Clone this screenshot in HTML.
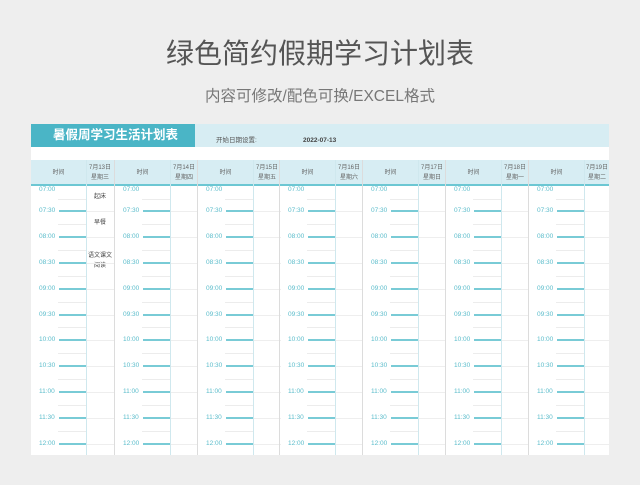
<!DOCTYPE html>
<html><head><meta charset="utf-8"><style>
*{margin:0;padding:0;box-sizing:border-box}
body{width:640px;height:485px;background:#eeeeee;position:relative;overflow:hidden;font-family:"Liberation Sans","Noto Sans CJK SC",sans-serif}
.t1{position:absolute;left:0;width:640px;top:36px;text-align:center;font-size:28px;color:#555;letter-spacing:0px;line-height:36px}
.t2{position:absolute;left:0;width:640px;top:87px;text-align:center;font-size:15.5px;color:#777;line-height:20px}
.sheet{position:absolute;left:31px;top:124px;width:578px;height:331px;background:#fff}
.band{position:absolute;left:0;top:0;width:578px;height:23px;background:#d7edf3}
.ttl{position:absolute;left:0;top:0;width:164px;height:23px;background:#4ab5c6;color:#fff;font-weight:bold;font-size:12.5px;line-height:23px;padding-left:22px}
.lab{position:absolute;top:13px;font-size:6.5px;color:#555;line-height:8px}
.hdr{position:absolute;left:0;top:36px;width:578px;height:26px;background:#d7edf3;border-bottom:2px solid #6cc7d3}
.g{position:absolute;top:36px;width:83px;height:295px;border-left:1px solid #dcdcdc}
.g .h1{position:absolute;left:0;top:0;width:55px;height:26px;line-height:26px;text-align:center;font-size:6px;color:#666}
.g .h2{position:absolute;left:55px;top:3px;width:28px;text-align:center;font-size:6px;color:#666;line-height:10px}
.g .dv{position:absolute;left:55px;top:0;width:1px;height:295px;background:#cfe8ee}
.g .tm{position:absolute;left:8px;font-size:6.5px;color:#5bbccb;line-height:8px}
.g .tl{position:absolute;left:28px;width:27px;height:2px;background:#79cbd6}
.g .hl{position:absolute;left:27px;width:28px;height:1px;background:#ececec}
.g .dl{position:absolute;left:56px;width:27px;height:1px;background:#eeeeee}
.ev{position:absolute;left:55px;width:28px;text-align:center;font-size:6px;color:#444;line-height:10px}
</style></head><body>
<div class="t1">绿色简约假期学习计划表</div>
<div class="t2">内容可修改/配色可换/EXCEL格式</div>
<div class="sheet">
<div class="band"></div>
<div class="ttl">暑假周学习生活计划表</div>
<div class="lab" style="left:185px">开始日期设置:</div>
<div class="lab" style="left:272px;font-weight:bold;color:#444">2022-07-13</div>
<div class="hdr"></div>

<div class="g" style="left:0;border-left:none">
<div class="h1">时间</div><div class="h2">7月13日<br>星期三</div><div class="dv"></div>
<div class="ev" style="top:32px">起床</div><div class="ev" style="top:58px">早餐</div><div class="ev" style="top:91px">语文课文<br>阅读</div>
<div class="tm" style="top:26px">07:00</div><div class="tm" style="top:47px">07:30</div><div class="tm" style="top:73px">08:00</div><div class="tm" style="top:99px">08:30</div><div class="tm" style="top:125px">09:00</div><div class="tm" style="top:151px">09:30</div><div class="tm" style="top:176px">10:00</div><div class="tm" style="top:202px">10:30</div><div class="tm" style="top:228px">11:00</div><div class="tm" style="top:254px">11:30</div><div class="tm" style="top:280px">12:00</div>
<div class="tl" style="top:50px"></div><div class="tl" style="top:76px"></div><div class="tl" style="top:102px"></div><div class="tl" style="top:128px"></div><div class="tl" style="top:154px"></div><div class="tl" style="top:179px"></div><div class="tl" style="top:205px"></div><div class="tl" style="top:231px"></div><div class="tl" style="top:257px"></div><div class="tl" style="top:283px"></div>
<div class="hl" style="top:39px"></div><div class="hl" style="top:64px"></div><div class="hl" style="top:90px"></div><div class="hl" style="top:116px"></div><div class="hl" style="top:142px"></div><div class="hl" style="top:167px"></div><div class="hl" style="top:193px"></div><div class="hl" style="top:219px"></div><div class="hl" style="top:245px"></div><div class="hl" style="top:271px"></div>
<div class="dl" style="top:51px"></div><div class="dl" style="top:77px"></div><div class="dl" style="top:103px"></div><div class="dl" style="top:129px"></div><div class="dl" style="top:155px"></div><div class="dl" style="top:180px"></div><div class="dl" style="top:206px"></div><div class="dl" style="top:232px"></div><div class="dl" style="top:258px"></div><div class="dl" style="top:284px"></div>
</div>

<div class="g" style="left:83px">
<div class="h1">时间</div><div class="h2">7月14日<br>星期四</div><div class="dv"></div>
<div class="tm" style="top:26px">07:00</div><div class="tm" style="top:47px">07:30</div><div class="tm" style="top:73px">08:00</div><div class="tm" style="top:99px">08:30</div><div class="tm" style="top:125px">09:00</div><div class="tm" style="top:151px">09:30</div><div class="tm" style="top:176px">10:00</div><div class="tm" style="top:202px">10:30</div><div class="tm" style="top:228px">11:00</div><div class="tm" style="top:254px">11:30</div><div class="tm" style="top:280px">12:00</div>
<div class="tl" style="top:50px"></div><div class="tl" style="top:76px"></div><div class="tl" style="top:102px"></div><div class="tl" style="top:128px"></div><div class="tl" style="top:154px"></div><div class="tl" style="top:179px"></div><div class="tl" style="top:205px"></div><div class="tl" style="top:231px"></div><div class="tl" style="top:257px"></div><div class="tl" style="top:283px"></div>
<div class="hl" style="top:39px"></div><div class="hl" style="top:64px"></div><div class="hl" style="top:90px"></div><div class="hl" style="top:116px"></div><div class="hl" style="top:142px"></div><div class="hl" style="top:167px"></div><div class="hl" style="top:193px"></div><div class="hl" style="top:219px"></div><div class="hl" style="top:245px"></div><div class="hl" style="top:271px"></div>
<div class="dl" style="top:51px"></div><div class="dl" style="top:77px"></div><div class="dl" style="top:103px"></div><div class="dl" style="top:129px"></div><div class="dl" style="top:155px"></div><div class="dl" style="top:180px"></div><div class="dl" style="top:206px"></div><div class="dl" style="top:232px"></div><div class="dl" style="top:258px"></div><div class="dl" style="top:284px"></div>
</div>

<div class="g" style="left:166px">
<div class="h1">时间</div><div class="h2">7月15日<br>星期五</div><div class="dv"></div>
<div class="tm" style="top:26px">07:00</div><div class="tm" style="top:47px">07:30</div><div class="tm" style="top:73px">08:00</div><div class="tm" style="top:99px">08:30</div><div class="tm" style="top:125px">09:00</div><div class="tm" style="top:151px">09:30</div><div class="tm" style="top:176px">10:00</div><div class="tm" style="top:202px">10:30</div><div class="tm" style="top:228px">11:00</div><div class="tm" style="top:254px">11:30</div><div class="tm" style="top:280px">12:00</div>
<div class="tl" style="top:50px"></div><div class="tl" style="top:76px"></div><div class="tl" style="top:102px"></div><div class="tl" style="top:128px"></div><div class="tl" style="top:154px"></div><div class="tl" style="top:179px"></div><div class="tl" style="top:205px"></div><div class="tl" style="top:231px"></div><div class="tl" style="top:257px"></div><div class="tl" style="top:283px"></div>
<div class="hl" style="top:39px"></div><div class="hl" style="top:64px"></div><div class="hl" style="top:90px"></div><div class="hl" style="top:116px"></div><div class="hl" style="top:142px"></div><div class="hl" style="top:167px"></div><div class="hl" style="top:193px"></div><div class="hl" style="top:219px"></div><div class="hl" style="top:245px"></div><div class="hl" style="top:271px"></div>
<div class="dl" style="top:51px"></div><div class="dl" style="top:77px"></div><div class="dl" style="top:103px"></div><div class="dl" style="top:129px"></div><div class="dl" style="top:155px"></div><div class="dl" style="top:180px"></div><div class="dl" style="top:206px"></div><div class="dl" style="top:232px"></div><div class="dl" style="top:258px"></div><div class="dl" style="top:284px"></div>
</div>

<div class="g" style="left:248px">
<div class="h1">时间</div><div class="h2">7月16日<br>星期六</div><div class="dv"></div>
<div class="tm" style="top:26px">07:00</div><div class="tm" style="top:47px">07:30</div><div class="tm" style="top:73px">08:00</div><div class="tm" style="top:99px">08:30</div><div class="tm" style="top:125px">09:00</div><div class="tm" style="top:151px">09:30</div><div class="tm" style="top:176px">10:00</div><div class="tm" style="top:202px">10:30</div><div class="tm" style="top:228px">11:00</div><div class="tm" style="top:254px">11:30</div><div class="tm" style="top:280px">12:00</div>
<div class="tl" style="top:50px"></div><div class="tl" style="top:76px"></div><div class="tl" style="top:102px"></div><div class="tl" style="top:128px"></div><div class="tl" style="top:154px"></div><div class="tl" style="top:179px"></div><div class="tl" style="top:205px"></div><div class="tl" style="top:231px"></div><div class="tl" style="top:257px"></div><div class="tl" style="top:283px"></div>
<div class="hl" style="top:39px"></div><div class="hl" style="top:64px"></div><div class="hl" style="top:90px"></div><div class="hl" style="top:116px"></div><div class="hl" style="top:142px"></div><div class="hl" style="top:167px"></div><div class="hl" style="top:193px"></div><div class="hl" style="top:219px"></div><div class="hl" style="top:245px"></div><div class="hl" style="top:271px"></div>
<div class="dl" style="top:51px"></div><div class="dl" style="top:77px"></div><div class="dl" style="top:103px"></div><div class="dl" style="top:129px"></div><div class="dl" style="top:155px"></div><div class="dl" style="top:180px"></div><div class="dl" style="top:206px"></div><div class="dl" style="top:232px"></div><div class="dl" style="top:258px"></div><div class="dl" style="top:284px"></div>
</div>

<div class="g" style="left:331px">
<div class="h1">时间</div><div class="h2">7月17日<br>星期日</div><div class="dv"></div>
<div class="tm" style="top:26px">07:00</div><div class="tm" style="top:47px">07:30</div><div class="tm" style="top:73px">08:00</div><div class="tm" style="top:99px">08:30</div><div class="tm" style="top:125px">09:00</div><div class="tm" style="top:151px">09:30</div><div class="tm" style="top:176px">10:00</div><div class="tm" style="top:202px">10:30</div><div class="tm" style="top:228px">11:00</div><div class="tm" style="top:254px">11:30</div><div class="tm" style="top:280px">12:00</div>
<div class="tl" style="top:50px"></div><div class="tl" style="top:76px"></div><div class="tl" style="top:102px"></div><div class="tl" style="top:128px"></div><div class="tl" style="top:154px"></div><div class="tl" style="top:179px"></div><div class="tl" style="top:205px"></div><div class="tl" style="top:231px"></div><div class="tl" style="top:257px"></div><div class="tl" style="top:283px"></div>
<div class="hl" style="top:39px"></div><div class="hl" style="top:64px"></div><div class="hl" style="top:90px"></div><div class="hl" style="top:116px"></div><div class="hl" style="top:142px"></div><div class="hl" style="top:167px"></div><div class="hl" style="top:193px"></div><div class="hl" style="top:219px"></div><div class="hl" style="top:245px"></div><div class="hl" style="top:271px"></div>
<div class="dl" style="top:51px"></div><div class="dl" style="top:77px"></div><div class="dl" style="top:103px"></div><div class="dl" style="top:129px"></div><div class="dl" style="top:155px"></div><div class="dl" style="top:180px"></div><div class="dl" style="top:206px"></div><div class="dl" style="top:232px"></div><div class="dl" style="top:258px"></div><div class="dl" style="top:284px"></div>
</div>

<div class="g" style="left:414px">
<div class="h1">时间</div><div class="h2">7月18日<br>星期一</div><div class="dv"></div>
<div class="tm" style="top:26px">07:00</div><div class="tm" style="top:47px">07:30</div><div class="tm" style="top:73px">08:00</div><div class="tm" style="top:99px">08:30</div><div class="tm" style="top:125px">09:00</div><div class="tm" style="top:151px">09:30</div><div class="tm" style="top:176px">10:00</div><div class="tm" style="top:202px">10:30</div><div class="tm" style="top:228px">11:00</div><div class="tm" style="top:254px">11:30</div><div class="tm" style="top:280px">12:00</div>
<div class="tl" style="top:50px"></div><div class="tl" style="top:76px"></div><div class="tl" style="top:102px"></div><div class="tl" style="top:128px"></div><div class="tl" style="top:154px"></div><div class="tl" style="top:179px"></div><div class="tl" style="top:205px"></div><div class="tl" style="top:231px"></div><div class="tl" style="top:257px"></div><div class="tl" style="top:283px"></div>
<div class="hl" style="top:39px"></div><div class="hl" style="top:64px"></div><div class="hl" style="top:90px"></div><div class="hl" style="top:116px"></div><div class="hl" style="top:142px"></div><div class="hl" style="top:167px"></div><div class="hl" style="top:193px"></div><div class="hl" style="top:219px"></div><div class="hl" style="top:245px"></div><div class="hl" style="top:271px"></div>
<div class="dl" style="top:51px"></div><div class="dl" style="top:77px"></div><div class="dl" style="top:103px"></div><div class="dl" style="top:129px"></div><div class="dl" style="top:155px"></div><div class="dl" style="top:180px"></div><div class="dl" style="top:206px"></div><div class="dl" style="top:232px"></div><div class="dl" style="top:258px"></div><div class="dl" style="top:284px"></div>
</div>

<div class="g" style="left:497px;width:81px">
<div class="h1">时间</div><div class="h2" style="width:26px">7月19日<br>星期二</div><div class="dv"></div>
<div class="tm" style="top:26px">07:00</div><div class="tm" style="top:47px">07:30</div><div class="tm" style="top:73px">08:00</div><div class="tm" style="top:99px">08:30</div><div class="tm" style="top:125px">09:00</div><div class="tm" style="top:151px">09:30</div><div class="tm" style="top:176px">10:00</div><div class="tm" style="top:202px">10:30</div><div class="tm" style="top:228px">11:00</div><div class="tm" style="top:254px">11:30</div><div class="tm" style="top:280px">12:00</div>
<div class="tl" style="top:50px"></div><div class="tl" style="top:76px"></div><div class="tl" style="top:102px"></div><div class="tl" style="top:128px"></div><div class="tl" style="top:154px"></div><div class="tl" style="top:179px"></div><div class="tl" style="top:205px"></div><div class="tl" style="top:231px"></div><div class="tl" style="top:257px"></div><div class="tl" style="top:283px"></div>
<div class="hl" style="top:39px"></div><div class="hl" style="top:64px"></div><div class="hl" style="top:90px"></div><div class="hl" style="top:116px"></div><div class="hl" style="top:142px"></div><div class="hl" style="top:167px"></div><div class="hl" style="top:193px"></div><div class="hl" style="top:219px"></div><div class="hl" style="top:245px"></div><div class="hl" style="top:271px"></div>
<div class="dl" style="top:51px"></div><div class="dl" style="top:77px"></div><div class="dl" style="top:103px"></div><div class="dl" style="top:129px"></div><div class="dl" style="top:155px"></div><div class="dl" style="top:180px"></div><div class="dl" style="top:206px"></div><div class="dl" style="top:232px"></div><div class="dl" style="top:258px"></div><div class="dl" style="top:284px"></div>
</div>
</div>
</body></html>
